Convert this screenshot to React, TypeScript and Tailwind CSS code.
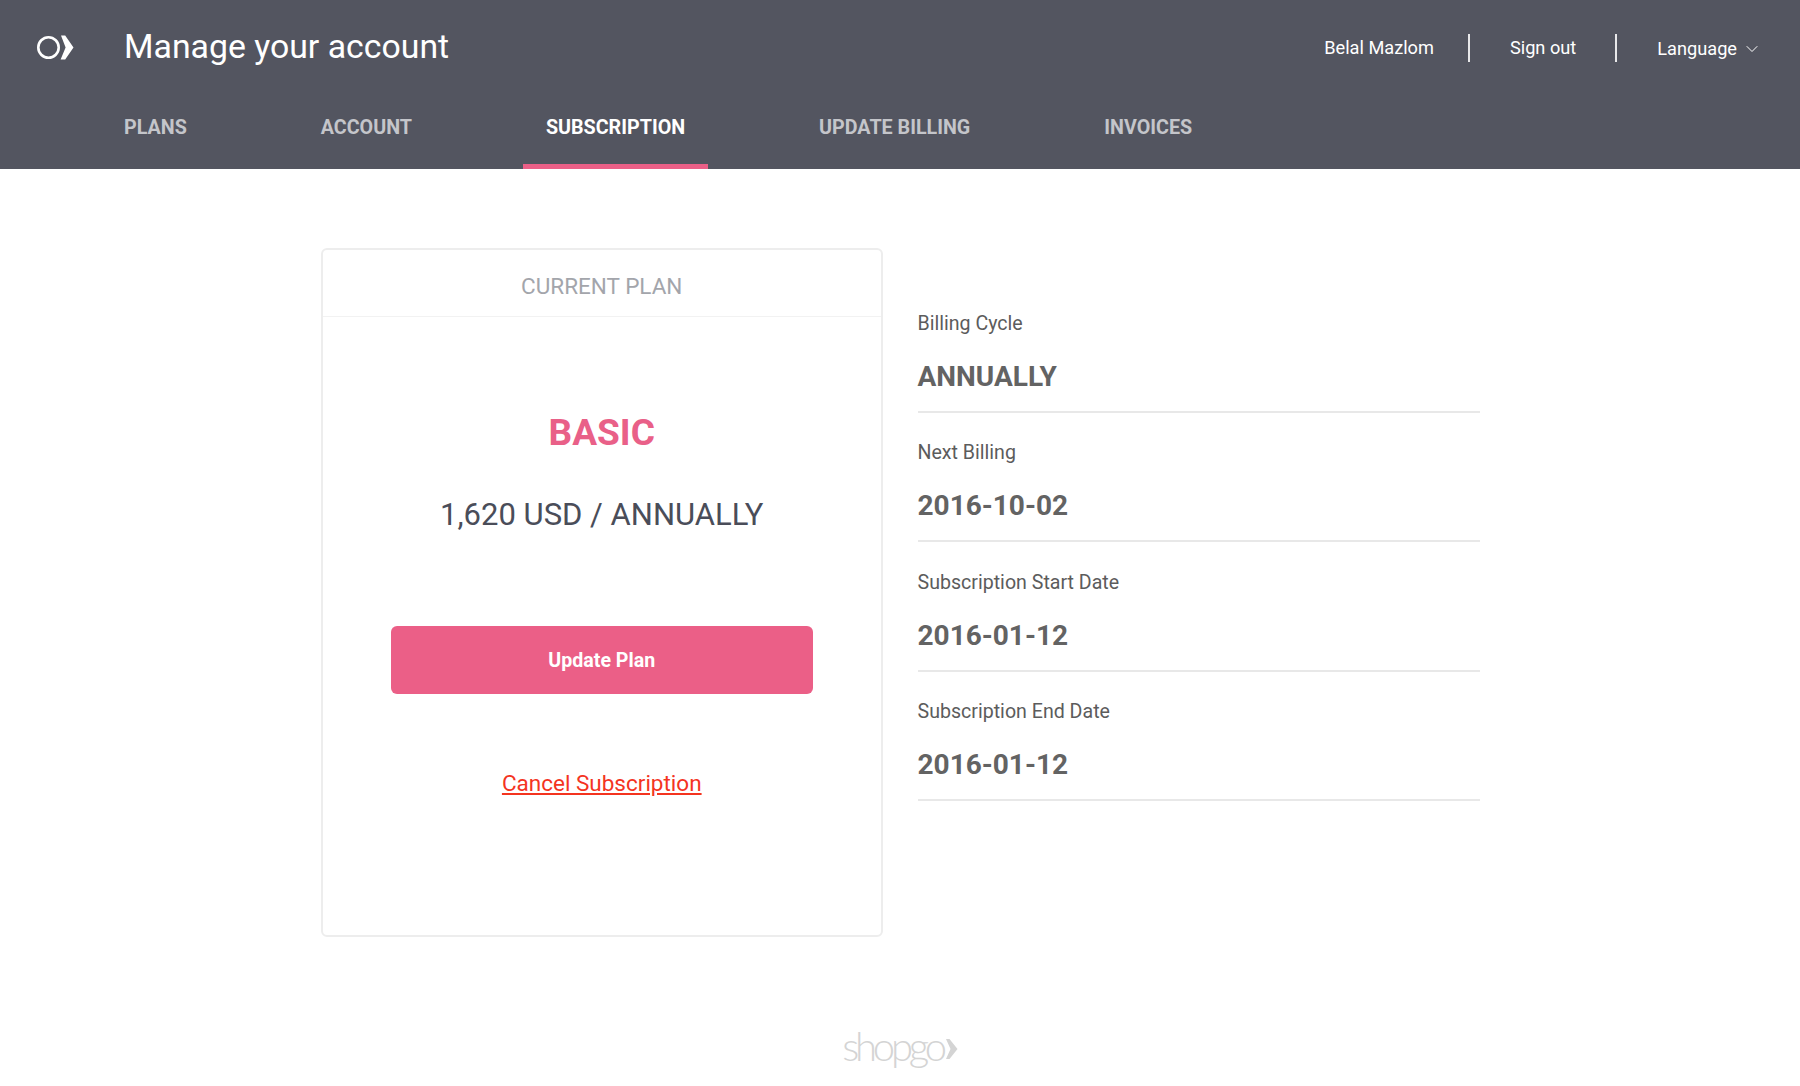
import { ChevronDown } from "lucide-react";

const tabs = [
  { title: "PLANS" },
  { title: "ACCOUNT" },
  { title: "SUBSCRIPTION", active: true },
  { title: "UPDATE BILLING" },
  { title: "INVOICES" },
];

const details = [
  { label: "Billing Cycle", value: "ANNUALLY" },
  { label: "Next Billing", value: "2016-10-02" },
  { label: "Subscription Start Date", value: "2016-01-12" },
  { label: "Subscription End Date", value: "2016-01-12" },
];

function LogoMark() {
  return (
    <svg width="37" height="25" viewBox="0 0 37 25" className="block">
      <circle cx="11.5" cy="12.5" r="10.2" fill="none" stroke="#fff" strokeWidth="2.6" />
      <polygon points="24,0.5 28.2,0.5 36.5,12.5 28.2,24.5 23.6,24.5 28.6,12.5" fill="#fff" />
    </svg>
  );
}

export default function App() {
  return (
    <div className="min-h-[1086px] bg-white font-['Roboto',sans-serif]">
      <header className="h-[169px] bg-[#535560] flex flex-col">
        <div className="h-[92px] flex items-center pl-[37px] pr-[38px] pt-[2px]">
          <LogoMark />
          <h1 className="ml-[50px] text-[33.8px] leading-[40px] text-white">Manage your account</h1>
          <div className="ml-auto flex items-center text-[18.2px] text-white mt-[2px]">
            <span>Belal Mazlom</span>
            <span className="w-[2px] h-[28px] bg-[#e8e8ea] ml-[34px] mr-[40px]" />
            <span>Sign out</span>
            <span className="w-[2px] h-[28px] bg-[#e8e8ea] ml-[39px] mr-[40px]" />
            <span className="flex items-center mt-[2px]">
              Language
              <ChevronDown className="w-[20px] h-[20px] ml-[5px]" strokeWidth={1.2} />
            </span>
          </div>
        </div>
        <nav className="flex-1 flex pl-[101px] gap-[88px]">
          {tabs.map((tab) => (
            <a
              key={tab.title}
              className={
                tab.active
                  ? "px-[23px] h-full pt-[24px] text-[19.7px] leading-[24px] font-bold text-white border-b-[5px] border-[#eb5f87]"
                  : "px-[23px] h-full pt-[24px] text-[19.7px] leading-[24px] font-bold text-[#c4c5ca]"
              }
            >
              {tab.title}
            </a>
          ))}
        </nav>
      </header>

      <main className="mx-auto w-[1159px] pt-[79px] flex gap-[34.5px]">
        <section className="w-[562.5px] h-[689px] border-2 border-[#ededed] rounded-[6px] flex flex-col items-center">
          <div className="w-full h-[67px] pt-[8px] border-b border-[#f2f2f2] flex items-center justify-center text-[22.5px] text-[#a3a5ab]">
            CURRENT PLAN
          </div>
          <div className="mt-[93px] text-[37px] leading-[46px] font-bold text-[#e96088]">BASIC</div>
          <div className="mt-[36px] text-[31px] leading-[46px] text-[#4a4d59]">1,620 USD / ANNUALLY</div>
          <button className="mt-[88px] w-[422px] h-[68px] pt-[2px] rounded-[6px] bg-[#eb5f87] text-white text-[19.6px] font-bold">
            Update Plan
          </button>
          <a className="mt-[74px] text-[22.5px] leading-[30px] text-[#f4341f] underline">Cancel Subscription</a>
        </section>

        <section className="w-[562px] pt-[35px]">
          {details.map((row) => (
            <div key={row.label} className="h-[129.6px] pt-[27.5px] border-b-2 border-[#e8e8e8]">
              <div className="text-[19.6px] leading-[25px] text-[#5c5c5c]">{row.label}</div>
              <div className="mt-[22px] text-[28px] leading-[38px] font-bold text-[#636363]">{row.value}</div>
            </div>
          ))}
        </section>
      </main>

      <footer className="mt-[85px] flex items-center justify-center text-[#d4d4d4]">
        <span className="font-['Lato',sans-serif] font-light text-[40px] leading-[48px] tracking-[-4.2px]">shopgo</span>
        <svg width="12" height="20" viewBox="0 0 12 20" className="ml-[3px] mt-[6px]">
          <polygon points="0,0 3.5,0 11.5,10 3.5,20 0,20 4.5,10" fill="#d4d4d4" />
        </svg>
      </footer>
    </div>
  );
}
